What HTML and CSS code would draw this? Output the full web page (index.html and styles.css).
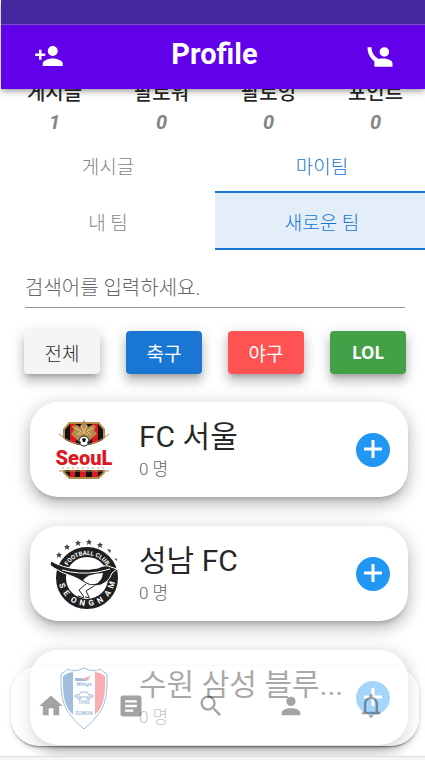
FILE: index.html
```html
<!DOCTYPE html>
<html lang="ko">
<head>
<meta charset="utf-8">
<meta name="viewport" content="width=device-width, initial-scale=1">
<title>Profile</title>
<link rel="stylesheet" href="styles.css">
</head>
<body>
<div class="app">
  <header class="header">
    <div class="system-bar"></div>
    <div class="app-bar">
      <button class="icon-button" type="button" aria-label="친구 추가">
        <svg class="icon" viewBox="0 0 24 24"><path d="M15 14c-2.67 0-8 1.33-8 4v2h16v-2c0-2.67-5.33-4-8-4m-9-4V7H4v3H1v2h3v3h2v-3h3v-2m6 2a4 4 0 0 0 4-4 4 4 0 0 0-4-4 4 4 0 0 0-4 4 4 4 0 0 0 4 4z"/></svg>
      </button>
      <h1 class="app-title">Profile</h1>
      <button class="icon-button" type="button" aria-label="인사하기">
        <svg class="icon" viewBox="0 0 24 24"><path d="M15.500 12.500a3.800 3.800 0 1 0 0-7.600 3.800 3.800 0 0 0 0 7.600zM2 5h3.200c0 4.500 2.300 7.500 6 9.300 5-.8 10.800.7 10.800 3.700v2.500H7.500v-4.300C4 13.500 2 10 2 5z"/></svg>
      </button>
    </div>
  </header>

  <main class="content">
    <dl class="stats">
      <div class="stat"><dt>게시글</dt><dd>1</dd></div>
      <div class="stat"><dt>팔로워</dt><dd>0</dd></div>
      <div class="stat"><dt>팔로잉</dt><dd>0</dd></div>
      <div class="stat"><dt>포인트</dt><dd>0</dd></div>
    </dl>

    <nav class="tabs tabs-main">
      <button class="tab" type="button">게시글</button>
      <button class="tab tab-active" type="button">마이팀</button>
    </nav>
    <nav class="tabs">
      <button class="tab" type="button">내 팀</button>
      <button class="tab tab-active tab-filled" type="button">새로운 팀</button>
    </nav>

    <input class="search" type="text" aria-label="팀 검색" placeholder="검색어를 입력하세요.">

    <div class="filters">
      <button class="filter filter-all" type="button">전체</button>
      <button class="filter filter-soccer" type="button">축구</button>
      <button class="filter filter-baseball" type="button">야구</button>
      <button class="filter filter-lol" type="button">LOL</button>
    </div>

    <ul class="teams">
      <li class="team">
        <svg class="logo" viewBox="0 0 80 80" role="img" aria-label="FC 서울">
          <path d="M25 12h30l6 7v44l-6 6H25l-6-6V19z" fill="#b58b4c"/>
          <path d="M26 14h28l5 6v42l-5 5H26l-5-5V20z" fill="#111"/>
          <path d="M26 14h5v53h-5zM36 14h6v53h-6zM48 14h6v53h-6z" fill="#dc1823"/>
          <path d="M21 20l5-6h28l5 6v13q-19 13-38 0z" fill="#111"/>
          <path d="M26 14h6v23l-6-3zM48 14h6v20l-6 3z" fill="#dc1823"/>
          <path d="M28 16l5-1 3 2 4-7 4 7 4-2 4 1-2 4 3 4-5 4-3 4H35l-4-4-4-4 3-4z" fill="#b58b4c"/>
          <path d="M31 18l6 3-4 4m16-7-6 3 4 4M37 15l3 7 3-7M35 25l4-3 5 3" fill="none" stroke="#e3c98f"/>
          <path d="M15 25q25 21 50 0v35H15z" fill="#fff"/>
          <path d="M15 24q25 21 50 0" fill="none" stroke="#b58b4c"/>
          <circle cx="40" cy="31" r="5" fill="#fff" stroke="#222"/>
          <path d="M38 29l2-1 2 1-1 3h-2zM35 31l2 1-1 2m9-3-2 1 1 2" fill="#111"/>
          <text class="seoul-name" x="40" y="55" text-anchor="middle">SeouL</text>
          <path d="M18 58h44" stroke="#c7a66e" stroke-dasharray="2 3" fill="none"/>
          <path d="M15 61h50" stroke="#b58b4c" fill="none"/>
        </svg>
        <div class="team-info"><h2 class="team-name">FC 서울</h2><p class="team-count">0 명</p></div>
        <button class="add" type="button" aria-label="FC 서울 추가"><svg viewBox="0 0 34 34"><path d="M17 7v18M8 16h18"/></svg></button>
      </li>
      <li class="team">
        <svg class="logo" viewBox="0 0 80 80" role="img" aria-label="성남 FC">
          <defs>
            <path id="arc-top" d="M20 44a23 23 0 0 1 46 0"/>
            <path id="star" d="M0-3 1-1 3-1 1.500.5 2 3 0 1.500-2 3-1.500.5-3-1-1-1z"/>
          </defs>
          <circle cx="43" cy="44" r="26" fill="#fff" stroke="#202020" stroke-width="10"/>
          <path d="M7 27q12 7 27 8 12 1 20-1 8-4 13-1l6 2-5 4q-2 6-6 9-5 4-11 4-7 0-12-4-4-3-9-5-12-4-20-9l-4-3z" fill="#202020" stroke="#fff"/>
          <path d="M39 46q4-6 20-7-1 9-8 11-7 1-12-4z" fill="#fff"/>
          <path d="M18 36q17 5 36 2l12-3" fill="none" stroke="#fff"/>
          <path d="M42 50l-7 6 5 7m10-11-8 5 3 6m-11-1 6 2m1-1 5 1" fill="none" stroke="#202020" stroke-width="1"/>
          <text class="crest-small"><textPath href="#arc-top" startOffset="50%" text-anchor="middle">FOOTBALL CLUB</textPath></text>
          <text class="crest-large" x="15 19 26 35 45 55 64 69" y="50 59 67 71 72 70 63 55" rotate="73 52 31 10 -10 -31 -52 -73">SEONGNAM</text>
          <g fill="#444"><use href="#star" x="15" y="21"/><use href="#star" x="23" y="13"/><use href="#star" x="34" y="9"/><use href="#star" x="45" y="8"/><use href="#star" x="56" y="11"/><path d="M63 15l4 1-1 3zM70 24l3 1v2z"/></g>
        </svg>
        <div class="team-info"><h2 class="team-name">성남 FC</h2><p class="team-count">0 명</p></div>
        <button class="add" type="button" aria-label="성남 FC 추가"><svg viewBox="0 0 34 34"><path d="M17 7v18M8 16h18"/></svg></button>
      </li>
      <li class="team">
        <svg class="logo" viewBox="0 0 80 80" role="img" aria-label="수원 삼성">
          <path d="M40 10q-10 5-16 1-3 3-7 5-1 28 7 38 7 10 16 17 9-7 16-17 8-10 7-38-4-2-7-5-6 4-16-1z" fill="#fff" stroke="#1658a8" stroke-width="1"/>
          <path d="M29 14l-5 1-5 3q-1 25 6 34l4 5z" fill="#165cad"/>
          <path d="M51 14l5 1 5 3q1 25-6 34l-4 5z" fill="#ef3340"/>
          <path d="M38 21l10-4-4 4-4 2z" fill="#ef3340"/>
          <path d="M31 20h7l2 2 7-2-5 3H31z" fill="#1658a8"/>
          <text class="suwon-text" x="40" y="28" text-anchor="middle">Wings</text>
          <path d="M31 39v-2h4l2-3h6l2 3h4v2zM34 39v2h3v-2m6 0v2h3v-2" fill="none" stroke="#1658a8"/>
          <text class="suwon-text suwon-year" x="40" y="46" text-anchor="middle">1995</text>
          <text class="suwon-text suwon-year" x="40" y="57" text-anchor="middle">SUWON</text>
        </svg>
        <div class="team-info"><h2 class="team-name">수원 삼성 블루...</h2><p class="team-count">0 명</p></div>
        <button class="add" type="button" aria-label="수원 삼성 추가"><svg viewBox="0 0 34 34"><path d="M17 7v18M8 16h18"/></svg></button>
      </li>
    </ul>
  </main>

  <nav class="bottom-nav">
    <a href="#home" aria-label="홈"><svg class="icon" viewBox="0 0 24 24"><path d="M10 20v-6h4v6h5v-8h3L12 3 2 12h3v8z"/></svg></a>
    <a href="#articles" aria-label="게시글"><svg class="icon" viewBox="0 0 24 24"><path d="M19 3H5a2 2 0 0 0-2 2v14a2 2 0 0 0 2 2h14a2 2 0 0 0 2-2V5a2 2 0 0 0-2-2m-5 14H7v-2h7v2m3-4H7v-2h10v2m0-4H7V7h10v2z"/></svg></a>
    <a href="#search" aria-label="검색"><svg class="icon" viewBox="0 0 24 24"><path d="M9.500 3A6.500 6.500 0 0 1 16 9.500c0 1.610-.59 3.090-1.560 4.230l.27.270h.79l5 5-1.500 1.500-5-5v-.79l-.27-.27A6.516 6.516 0 0 1 9.500 16 6.500 6.500 0 0 1 3 9.500 6.500 6.500 0 0 1 9.500 3m0 2C7 5 5 7 5 9.500S7 14 9.500 14 14 12 14 9.500 12 5 9.500 5z"/></svg></a>
    <a href="#profile" aria-label="프로필"><svg class="icon" viewBox="0 0 24 24"><path d="M12 4a4 4 0 0 1 4 4 4 4 0 0 1-4 4 4 4 0 0 1-4-4 4 4 0 0 1 4-4m0 10c4.420 0 8 1.790 8 4v2H4v-2c0-2.210 3.580-4 8-4z"/></svg></a>
    <a href="#alerts" aria-label="알림"><svg class="icon" viewBox="0 0 24 24"><path d="M16 17H8v-6.500C8 8 9.500 6 12 6s4 2 4 4.500V17m2-1v-5.500c0-3.070-1.640-5.640-4.500-6.320V3.500A1.500 1.500 0 0 0 12 2a1.500 1.500 0 0 0-1.500 1.500v.68C7.630 4.860 6 7.420 6 10.500V16l-2 2v1h16v-1l-2-2M12 22a2 2 0 0 0 2-2h-4a2 2 0 0 0 2 2z" fill-rule="evenodd"/></svg></a>
  </nav>
</div>
</body>
</html>
```
FILE: styles.css
```css
* {
  box-sizing: border-box;
}

body {
  margin: 0;
  background: #fff;
  color: rgba(0, 0, 0, 0.87);
  font-family: Roboto, "Noto Sans CJK KR", sans-serif;
  overflow: hidden;
}

button,
input {
  font: inherit;
  border: 0;
  padding: 0;
  background: none;
}

h1, h2, p, dl, dd, ul {
  margin: 0;
  padding: 0;
}

.app {
  height: 100vh;
  padding-left: 1px;
  overflow: hidden;
}

.header {
  position: relative;
  z-index: 2;
  box-shadow: 0 2px 4px -1px rgba(0, 0, 0, 0.2), 0 4px 5px rgba(0, 0, 0, 0.14), 0 1px 10px rgba(0, 0, 0, 0.12);
}

.system-bar {
  height: 25px;
  background: #4527a0;
  border-bottom: 1px solid #7650bd;
}

.app-bar {
  display: flex;
  align-items: center;
  justify-content: space-between;
  height: 64px;
  padding: 0 30px 2px 33px;
  background: #6200ea;
  color: #fff;
}

.app-title {
  font-size: 29px;
  line-height: 40px;
  font-weight: 700;
  padding-bottom: 4px;
}

.icon {
  display: block;
  width: 28px;
  height: 28px;
  fill: currentColor;
}

.icon-button {
  color: inherit;
}

.icon-button .icon {
  width: 30px;
  height: 30px;
}

.stats {
  display: grid;
  grid-template-columns: repeat(4, 1fr);
  width: calc(100% + 4px);
  margin-top: -11px;
  text-align: center;
}

.stat dt {
  font-size: 20px;
  line-height: 30px;
  font-weight: 500;
}

.stat dd {
  font-size: 20px;
  line-height: 28px;
  font-weight: 700;
  font-style: italic;
  color: #858585;
}

.tabs {
  display: grid;
  grid-template-columns: 1fr 1fr;
  width: calc(100% + 4px);
}

.tabs-main {
  margin-top: 2px;
}

.tab {
  height: 57px;
  padding-top: 6px;
  border-bottom: 2px solid transparent;
  color: #858585;
  font-size: 19px;
  line-height: 24px;
  font-weight: 300;
}

.tabs-main .tab {
  height: 55px;
}

.tabs .tab-active {
  color: #1976d2;
  border-bottom-color: #1976d2;
}

.tab-filled {
  background: #e3eef9;
}

.search {
  display: block;
  width: calc(100% - 44px);
  height: 40px;
  margin: 18px 20px 0 24px;
  border-bottom: 1px solid #949494;
  font-size: 20px;
  font-weight: 300;
  outline: 0;
}

.search::placeholder {
  color: #666;
}

.filters {
  display: flex;
  justify-content: space-between;
  margin: 23px 19px 0 23px;
}

.filter {
  width: 76px;
  height: 43px;
  border-radius: 4px;
  color: #fff;
  font-size: 19px;
  font-weight: 400;
  box-shadow: 0 5px 5px -3px rgba(0, 0, 0, 0.2), 0 8px 10px 1px rgba(0, 0, 0, 0.14), 0 3px 14px 2px rgba(0, 0, 0, 0.12);
}

.filter-all {
  background: #f5f5f5;
  color: rgba(0, 0, 0, 0.87);
  font-weight: 300;
}

.filter-soccer {
  background: #1976d2;
}

.filter-baseball {
  background: #ff5252;
}

.filter-lol {
  background: #43a047;
  font-family: "Noto Sans", sans-serif;
  font-size: 17px;
  font-weight: 700;
}

.teams {
  display: grid;
  grid-template-columns: minmax(0, 1fr);
  gap: 29px;
  margin: 28px 17px 0 29px;
  list-style: none;
}

.team {
  display: flex;
  align-items: center;
  height: 95px;
  padding: 0 18px 0 14px;
  border-radius: 28px;
  background: #fff;
  box-shadow: 0 5px 5px -3px rgba(0, 0, 0, 0.2), 0 8px 14px 1px rgba(0, 0, 0, 0.14), 0 3px 18px 3px rgba(0, 0, 0, 0.12);
}

.logo {
  flex: none;
  width: 80px;
  height: 80px;
}

.seoul-name {
  font: 900 20px Roboto, sans-serif;
  fill: #dc1823;
}

.crest-small {
  font: 700 6px Roboto, sans-serif;
  fill: #fff;
}

.crest-large {
  font: 700 8px Roboto, sans-serif;
  fill: #fff;
}

.suwon-text {
  font: italic 700 6px Roboto, sans-serif;
  fill: #1658a8;
}

.suwon-year {
  font-size: 5px;
  font-style: normal;
}

.team-info {
  flex: 1;
  min-width: 0;
  padding: 0 8px 2px 15px;
}

.team-name {
  font-size: 30px;
  line-height: 40px;
  font-weight: 400;
  white-space: nowrap;
}

.team-count {
  font-size: 17px;
  line-height: 24px;
  font-weight: 300;
  color: #666;
}

.add {
  flex: none;
  width: 34px;
  height: 34px;
  border-radius: 50%;
  background: #2196f3;
}

.add svg {
  display: block;
  fill: none;
  stroke: #fff;
  stroke-width: 3;
}

.bottom-nav {
  position: fixed;
  z-index: 3;
  right: 6px;
  bottom: 14px;
  left: 11px;
  display: grid;
  grid-template-columns: repeat(5, 1fr);
  align-items: center;
  justify-items: center;
  height: 80px;
  padding-right: 8px;
  border-radius: 28px;
  background: rgba(255, 255, 255, 0.6);
  box-shadow: 0 2px 2px -1px rgba(0, 0, 0, 0.4), 0 2px 5px rgba(0, 0, 0, 0.14);
}

.bottom-nav a {
  color: rgba(0, 0, 0, 0.36);
}

.app::after {
  content: "";
  position: fixed;
  right: 0;
  bottom: 0;
  left: 0;
  height: 3px;
  border-top: 1px solid #ddd;
  background: #f5f5f5;
}
```
